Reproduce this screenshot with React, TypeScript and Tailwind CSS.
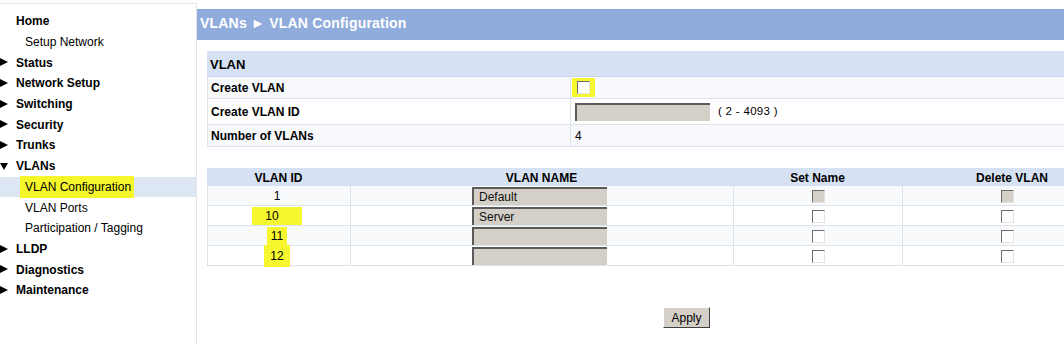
import React from "react";

type NavItem = { label: string; level: 0 | 1; arrow?: "right" | "down"; active?: boolean };

const nav: NavItem[] = [
    { label: "Home", level: 0 },
    { label: "Setup Network", level: 1 },
    { label: "Status", level: 0, arrow: "right" },
    { label: "Network Setup", level: 0, arrow: "right" },
    { label: "Switching", level: 0, arrow: "right" },
    { label: "Security", level: 0, arrow: "right" },
    { label: "Trunks", level: 0, arrow: "right" },
    { label: "VLANs", level: 0, arrow: "down" },
    { label: "VLAN Configuration", level: 1, active: true },
    { label: "VLAN Ports", level: 1 },
    { label: "Participation / Tagging", level: 1 },
    { label: "LLDP", level: 0, arrow: "right" },
    { label: "Diagnostics", level: 0, arrow: "right" },
    { label: "Maintenance", level: 0, arrow: "right" },
];

const vlans = [
    { id: "1", name: "Default", locked: true, mark: "" },
    { id: "10", name: "Server", locked: false, mark: "pl-[13px] pr-[23px]" },
    { id: "11", name: "", locked: false, mark: "pl-[4px] pr-[4px]" },
    { id: "12", name: "", locked: false, mark: "pl-[6px] pr-[6px] py-[2px]" },
];

function Arrow({ dir }: { dir: "right" | "down" }) {
    return (
        <svg width="8" height="8" viewBox="0 0 8 8" className="absolute left-0 top-[6px]">
            {dir === "right" ? <path d="M0 0 L8 4 L0 8 Z" fill="#000" /> : <path d="M0 1 L8 1 L4 8 Z" fill="#000" />}
        </svg>
    );
}

function Check({ locked }: { locked?: boolean }) {
    return (
        <span
            className={`inline-block w-[13px] h-[13px] border-t border-l border-b border-r border-t-[#6e6e6e] border-l-[#6e6e6e] border-b-[#e6e4de] border-r-[#e6e4de] ${
                locked ? "bg-[#d4d0c8]" : "bg-white"
            }`}
        />
    );
}

function Field({ w, value }: { w: string; value?: string }) {
    return (
        <div className={`${w} h-[18px] bg-[#d4d0c8] border-t-2 border-l-2 border-t-[#5a5a5a] border-l-[#5a5a5a] pl-[5px] text-[12px] leading-[16px] text-[#111]`}>
            {value}
        </div>
    );
}

export default function App() {
    return (
        <div className="w-[1064px] h-[345px] overflow-hidden bg-white flex text-black" style={{ fontFamily: '"Liberation Sans", Arial, sans-serif' }}>
            {/* ── Sidebar ── */}
            <div className="w-[197px] shrink-0 mt-[3px] border-t border-r border-[#e2e5e9] pt-[7px]">
                {nav.map((item) => (
                    <div key={item.label} className={`relative h-[20.7px] flex items-center ${item.active ? "bg-[#dde6f3]" : ""}`}>
                        {item.arrow && <Arrow dir={item.arrow} />}
                        {item.level === 0 ? (
                            <span className="pl-[16px] text-[12px] font-bold">{item.label}</span>
                        ) : item.active ? (
                            <span className="ml-[20px] pl-[5px] pr-[3px] py-[2px] bg-[#f5f72a] text-[12px]">{item.label}</span>
                        ) : (
                            <span className="pl-[25px] text-[12px]">{item.label}</span>
                        )}
                    </div>
                ))}
            </div>

            {/* ── Main ── */}
            <div className="w-[925px] shrink-0 pt-[9px]">
                <div className="h-[31px] bg-[#90acdd] flex items-center pl-[3px] text-white font-bold text-[14px] tracking-[0.2px] pb-[3px]">
                    VLANs ► VLAN Configuration
                </div>

                {/* VLAN form */}
                <div className="ml-[10px] mt-[11px] w-[905px] text-[12px]">
                    <div className="h-[26px] bg-[#d6e2f4] border-b border-[#c8d5ea] flex items-center pl-[3px] pt-[2px] font-bold text-[13px]">VLAN</div>
                    <div className="flex h-[22px] bg-[#f7f9fc] border-b border-l border-[#dde3ea]">
                        <div className="w-[363px] border-r border-[#dde3ea] flex items-center pl-[3px] pt-[1px] font-bold">Create VLAN</div>
                        <div className="flex items-center pl-[1px]">
                            <span className="bg-[#f7f730] px-[5px] py-[3px] flex">
                                <Check />
                            </span>
                        </div>
                    </div>
                    <div className="flex h-[26px] bg-white border-b border-l border-[#dde3ea]">
                        <div className="w-[363px] border-r border-[#dde3ea] flex items-center pl-[3px] font-bold">Create VLAN ID</div>
                        <div className="flex items-center pl-[4px] gap-[8px]">
                            <Field w="w-[135px]" />
                            <span className="text-[11.5px] tracking-[0.3px]">( 2 - 4093 )</span>
                        </div>
                    </div>
                    <div className="flex h-[22px] bg-[#f7f9fc] border-b border-l border-[#dde3ea]">
                        <div className="w-[363px] border-r border-[#dde3ea] flex items-center pl-[3px] pt-[1px] font-bold">Number of VLANs</div>
                        <div className="flex items-center pl-[4px] pt-[1px]">4</div>
                    </div>
                </div>

                {/* VLAN list */}
                <div className="ml-[10px] mt-[21px] w-[905px] text-[12px]">
                    <div className="flex h-[18px] bg-[#d6e2f4] font-bold items-center pt-[2px]">
                        <div className="w-[143px] text-center">VLAN ID</div>
                        <div className="w-[383px] text-center">VLAN NAME</div>
                        <div className="w-[169px] text-center">Set Name</div>
                        <div className="w-[210px] text-center pl-[10px]">Delete VLAN</div>
                    </div>
                    {vlans.map((v, i) => (
                        <div key={v.id} className={`flex h-[20px] border-b border-l border-[#dde3ea] ${i % 2 === 0 ? "bg-[#f9fafc]" : "bg-white"}`}>
                            <div className="w-[143px] border-r border-[#dde3ea] flex items-center justify-center pr-[4px]">
                                {v.mark ? <span className={`bg-[#f7f730] ${v.mark}`}>{v.id}</span> : v.id}
                            </div>
                            <div className="w-[383px] border-r border-[#dde3ea] flex items-center justify-center pr-[5px]">
                                <Field w="w-[135px]" value={v.name} />
                            </div>
                            <div className="w-[169px] border-r border-[#dde3ea] flex items-center justify-center pt-[1px]">
                                <Check locked={v.locked} />
                            </div>
                            <div className="w-[209px] flex items-center justify-center pt-[1px]">
                                <Check locked={v.locked} />
                            </div>
                        </div>
                    ))}
                </div>

                <div className="mt-[41px] pl-[466px]">
                    <button className="w-[47px] h-[21px] bg-[#d4d0c8] border border-t-white border-l-white border-b-[#404040] border-r-[#404040] text-[12px] flex items-center justify-center">
                        Apply
                    </button>
                </div>
            </div>
        </div>
    );
}
